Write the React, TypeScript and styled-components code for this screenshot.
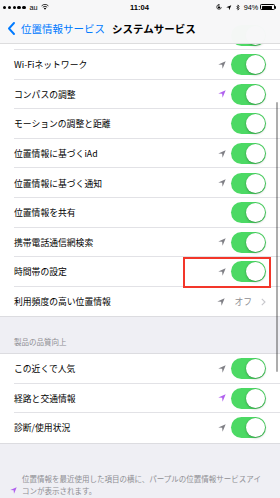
import React from 'react';
import styled, { createGlobalStyle } from 'styled-components';

const Global = createGlobalStyle`
  html, body { margin: 0; padding: 0; background: #efeff4; }
  body { font-family: "Noto Sans CJK JP", "Noto Sans", sans-serif; -webkit-font-smoothing: antialiased; }
  * { box-sizing: border-box; }
`;

const Screen = styled.div`
  position: relative;
  width: 280px;
  height: 498px;
  overflow: hidden;
  background: #efeff4;
`;

const Content = styled.div`
  display: flex;
  flex-direction: column;
  padding-top: 20.4px;
`;

const Header = styled.div`
  position: absolute;
  top: 0;
  left: 0;
  right: 0;
  height: 43.5px;
  background: rgba(247, 247, 248, 0.985);
  border-bottom: 1px solid rgba(0, 0, 0, 0.1);
  z-index: 5;
  display: flex;
  flex-direction: column;
`;

const StatusBar = styled.div`
  height: 14.5px;
  display: grid;
  grid-template-columns: 1fr auto 1fr;
  align-items: center;
  padding: 0 4px 0 3px;
  font-size: 7.3px;
  color: #000;
  font-family: "Liberation Sans", "Noto Sans", sans-serif;
`;

const StatusLeft = styled.div`
  display: flex;
  align-items: center;
  gap: 3px;
`;

const StatusRight = styled.div`
  display: flex;
  align-items: center;
  justify-content: flex-end;
  gap: 4px;
`;

const Dots = styled.div`
  display: flex;
  gap: 1.4px;
`;

const Dot = styled.span`
  width: 3.4px;
  height: 3.4px;
  border-radius: 50%;
  background: #000;
`;

const Clock = styled.div`
  font-weight: 700;
  font-size: 7.6px;
`;

const Battery = styled.div`
  display: flex;
  align-items: center;
  margin-left: -2px;
`;

const BatteryBody = styled.div`
  width: 14.5px;
  height: 6.4px;
  border: 0.8px solid #000;
  border-radius: 1.4px;
  padding: 0.7px;
  display: flex;
`;

const BatteryFill = styled.div`
  flex: 0 0 94%;
  background: #000;
  border-radius: 0.5px;
`;

const BatteryNub = styled.div`
  width: 1.2px;
  height: 2.6px;
  background: #000;
  border-radius: 0 1px 1px 0;
`;

const NavBar = styled.div`
  flex: 1;
  display: flex;
  align-items: center;
  padding-left: 8px;
  padding-bottom: 1px;
`;

const BackText = styled.span`
  color: #007aff;
  font-size: 10.5px;
  margin-left: 6px;
`;

const Title = styled.span`
  color: #000;
  font-size: 10.5px;
  font-weight: 700;
  margin-left: 7px;
`;

const Group = styled.div`
  background: #fff;
  display: flex;
  flex-direction: column;
  border-bottom: 1px solid #dcdce0;
`;

const GroupTop = styled(Group)`
  border-top: 1px solid #dcdce0;
`;

const Row = styled.div<{ $last?: boolean }>`
  position: relative;
  height: 29.6px;
  display: flex;
  align-items: center;
  padding: 0 14px;
  &::after {
    content: '';
    display: ${(p) => (p.$last ? 'none' : 'block')};
    position: absolute;
    left: 14px;
    right: 0;
    bottom: 0;
    height: 1px;
    background: #e2e2e6;
  }
`;

const Label = styled.span`
  flex: 1;
  font-size: 8.8px;
  color: #000;
  white-space: nowrap;
`;

const Accessory = styled.div`
  display: flex;
  align-items: center;
  gap: 5px;
`;

const Detail = styled.span`
  font-size: 8.8px;
  color: #8e8e93;
  margin-left: 4px;
`;

const Track = styled.div`
  position: relative;
  width: 35px;
  height: 21px;
  border-radius: 10.5px;
  background: #4cd964;
`;

const Knob = styled.div`
  position: absolute;
  top: 1px;
  right: 1px;
  width: 19px;
  height: 19px;
  border-radius: 50%;
  background: #fff;
  box-shadow: 0 1px 2.5px rgba(0, 0, 0, 0.28), 0 0 0 0.5px rgba(0, 0, 0, 0.06);
`;

const Highlight = styled.div`
  position: absolute;
  left: 183px;
  top: 0;
  width: 88px;
  height: 31px;
  border: 2.6px solid #f3362a;
  z-index: 2;
  pointer-events: none;
`;

const SectionHeader = styled.div`
  height: 35.6px;
  display: flex;
  align-items: flex-end;
  padding: 0 14px 6px;
  font-size: 7.5px;
  color: #8e8e93;
`;

const Footer = styled.div`
  display: flex;
  align-items: flex-start;
  gap: 5px;
  padding: 29px 14px 0 10px;
`;

const FooterIcon = styled.div`
  padding-top: 2.5px;
  flex: 0 0 auto;
`;

const FooterText = styled.p`
  margin: 0;
  font-size: 7.5px;
  line-height: 12.2px;
  color: #8e8e93;
`;

const ScrollIndicator = styled.div`
  position: absolute;
  left: 275.5px;
  top: 102px;
  width: 2px;
  height: 270px;
  border-radius: 1px;
  background: rgba(0, 0, 0, 0.32);
  z-index: 4;
`;

const Arrow = ({ color, size = 8 }: { color: string; size?: number }) => (
  <svg width={size} height={size} viewBox="0 0 10 10">
    <path d="M9.6 0.4 L0.4 4.3 L5.2 4.8 L5.7 9.6 Z" fill={color} />
  </svg>
);

const Switch = () => (
  <Track>
    <Knob />
  </Track>
);

type Item = {
  label: string;
  arrow?: 'gray' | 'purple';
  detail?: string;
  highlight?: boolean;
};

const GRAY = '#7f7f85';
const PURPLE = '#b060ee';

const group1: Item[] = [
  { label: '' },
  { label: 'Wi-Fiネットワーク', arrow: 'gray' },
  { label: 'コンパスの調整', arrow: 'purple' },
  { label: 'モーションの調整と距離' },
  { label: '位置情報に基づくiAd', arrow: 'gray' },
  { label: '位置情報に基づく通知', arrow: 'gray' },
  { label: '位置情報を共有' },
  { label: '携帯電話通信網検索', arrow: 'gray' },
  { label: '時間帯の設定', arrow: 'gray', highlight: true },
  { label: '利用頻度の高い位置情報', arrow: 'gray', detail: 'オフ' },
];

const group2: Item[] = [
  { label: 'この近くで人気', arrow: 'gray' },
  { label: '経路と交通情報', arrow: 'purple' },
  { label: '診断/使用状況', arrow: 'gray' },
];

const renderRow = (item: Item, i: number, arr: Item[]) => (
  <Row key={i} $last={i === arr.length - 1}>
    <Label>{item.label}</Label>
    <Accessory>
      {item.arrow && <Arrow color={item.arrow === 'purple' ? PURPLE : GRAY} />}
      {item.detail ? (
        <>
          <Detail>{item.detail}</Detail>
          <svg width="5" height="8" viewBox="0 0 5 8" style={{ marginLeft: 4 }}>
            <path d="M0.8 0.8 L4 4 L0.8 7.2" fill="none" stroke="#c7c7cc" strokeWidth="1.1" />
          </svg>
        </>
      ) : (
        <Switch />
      )}
    </Accessory>
    {item.highlight && <Highlight />}
  </Row>
);

export default function App() {
  return (
    <>
      <Global />
      <Screen>
        <Content>
          <Group>{group1.map(renderRow)}</Group>
          <SectionHeader>製品の品質向上</SectionHeader>
          <GroupTop>{group2.map(renderRow)}</GroupTop>
          <Footer>
            <FooterIcon>
              <Arrow color={PURPLE} size={7} />
            </FooterIcon>
            <FooterText>
              位置情報を最近使用した項目の横に、パープルの位置情報サービスアイコンが表示されます。
            </FooterText>
          </Footer>
        </Content>
        <ScrollIndicator />
        <Header>
          <StatusBar>
            <StatusLeft>
              <Dots>
                {[0, 1, 2, 3, 4].map((d) => (
                  <Dot key={d} />
                ))}
              </Dots>
              <span style={{ marginLeft: 1 }}>au</span>
              <svg width="8" height="6" viewBox="0 0 16 12">
                <path d="M8 11.5 L5.6 8.6 A3.8 3.8 0 0 1 10.4 8.6 Z" fill="#000" />
                <path d="M3.6 6.4 A6.6 6.6 0 0 1 12.4 6.4" fill="none" stroke="#000" strokeWidth="1.6" />
                <path d="M1.2 3.8 A10 10 0 0 1 14.8 3.8" fill="none" stroke="#000" strokeWidth="1.6" />
              </svg>
            </StatusLeft>
            <Clock>11:04</Clock>
            <StatusRight>
              <svg width="6" height="6" viewBox="0 0 12 12">
                <path d="M10.5 6 A4.5 4.5 0 1 1 6 1.5" fill="none" stroke="#000" strokeWidth="1.4" />
                <path d="M5 0 L8 1.6 L5 3.2 Z" fill="#000" />
                <rect x="4" y="5.4" width="4" height="3.2" fill="#000" />
                <path d="M4.8 5.4 V4.4 A1.2 1.2 0 0 1 7.2 4.4 V5.4" fill="none" stroke="#000" strokeWidth="0.8" />
              </svg>
              <Arrow color="#000" size={5.5} />
              <svg width="4" height="7" viewBox="0 0 8 14">
                <path d="M1 4 L6.5 9.5 L3.8 12.2 V1.8 L6.5 4.5 L1 10" fill="none" stroke="#000" strokeWidth="1.3" />
              </svg>
              <span>94%</span>
              <Battery>
                <BatteryBody>
                  <BatteryFill />
                </BatteryBody>
                <BatteryNub />
              </Battery>
            </StatusRight>
          </StatusBar>
          <NavBar>
            <svg width="7" height="13" viewBox="0 0 7 13">
              <path d="M6 1 L1 6.5 L6 12" fill="none" stroke="#007aff" strokeWidth="1.9" strokeLinecap="round" strokeLinejoin="round" />
            </svg>
            <BackText>位置情報サービス</BackText>
            <Title>システムサービス</Title>
          </NavBar>
        </Header>
      </Screen>
    </>
  );
}
